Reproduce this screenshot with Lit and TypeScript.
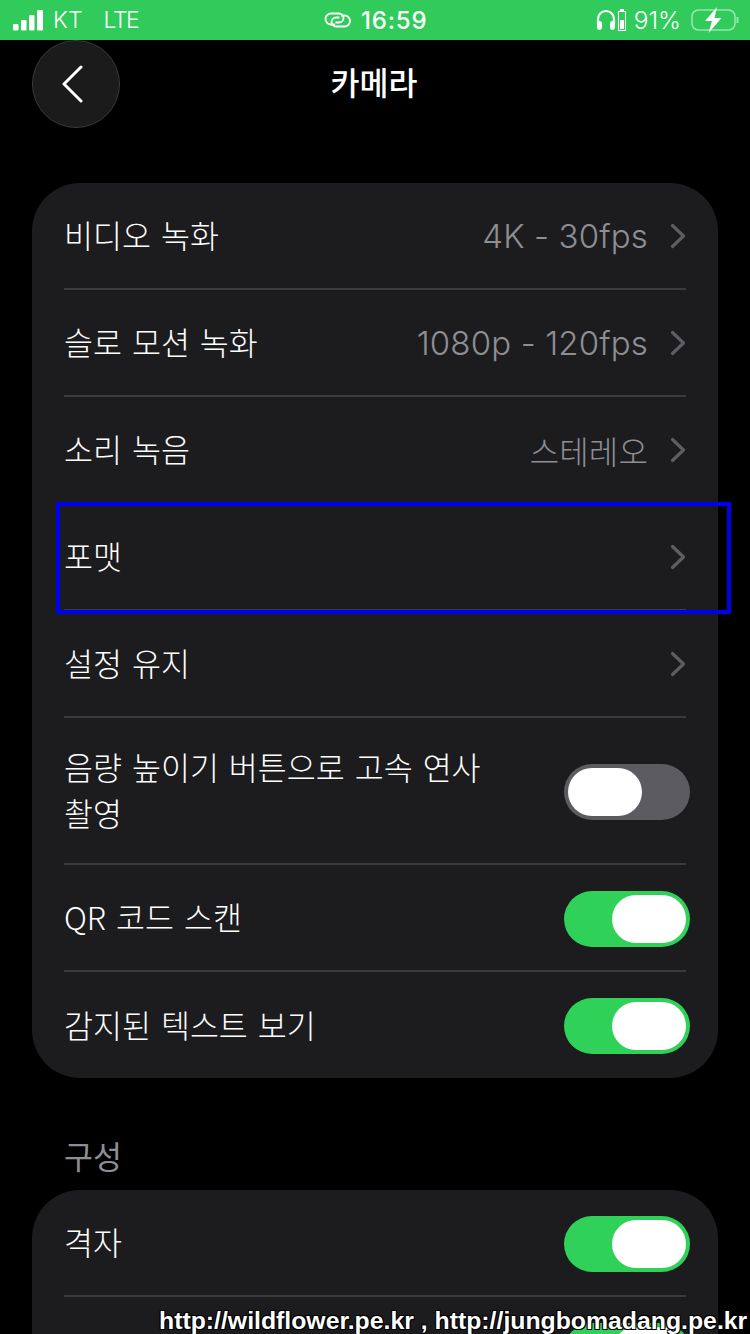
import { LitElement, html, css } from "lit";
import { customElement } from "lit/decorators.js";

const chevron = html`<svg class="chev" width="16" height="26" viewBox="0 0 16 26"><path d="M2.5 2.5 L13.5 13 L2.5 23.5" fill="none" stroke="#5d5d62" stroke-width="3.2" stroke-linecap="round" stroke-linejoin="round"/></svg>`;

@customElement("app-root")
export class AppRoot extends LitElement {
  static styles = css`
    :host { display: block; width: 750px; height: 1334px; overflow: hidden; position: relative; background: #000; color: #fff;
      font-family: "Noto Sans CJK KR", "Noto Sans", sans-serif; }
    .status { height: 40px; background: #30cb5a; display: flex; align-items: center; justify-content: space-between; padding: 0 11px 0 13px; font-family: "Inter", "Noto Sans", sans-serif; font-size: 23px; color: #fff; box-sizing: border-box; position: relative; }
    .st-left, .st-right { display: flex; align-items: center; }
    .st-left { gap: 6px; font-size: 23px; font-weight: 300; }
    .lte { margin-left: 15px; letter-spacing: -1.4px; }
    .st-center { position: absolute; left: 324px; top: 0; height: 40px; display: flex; align-items: center; gap: 9px; font-weight: 500; font-size: 24px; letter-spacing: 0.8px; }
    .st-right { font-weight: 300; font-size: 24.5px; }
    .cell { margin-left: 1px; }
    .pct { margin-left: 7px; margin-right: 10px; }
    .nav { height: 88px; position: relative; display: flex; align-items: center; justify-content: center; }
    .back { position: absolute; left: 32px; top: 0; width: 88px; height: 88px; border-radius: 50%; background: #1b1b1c; border: 1px solid #3a3a3b; box-sizing: border-box; display: flex; align-items: center; justify-content: center; }
    .back svg { margin-left: -6px; }
    .title { font-size: 31.5px; font-weight: 500; line-height: 44px; margin: -6px 0 0 -2px; }
    .content { padding: 55px 32px 0; display: flex; flex-direction: column; }
    .card { background: #1c1c1e; border-radius: 48px; padding: 0 32px; }
    .row { display: flex; align-items: center; justify-content: space-between; height: 105px; border-bottom: 2px solid #3b3b3e; font-size: 31.5px; line-height: 46px; font-weight: 300; word-spacing: 3px; }
    .row.last { border-bottom: none; height: 106px; }
    .row.last .toggle { margin-top: 2px; }
    .row.tall { height: 145px; }
    .label { max-width: 440px; margin-top: -3px; min-height: 46px; }
    .right { display: flex; align-items: center; gap: 22px; color: #8e8e93; font-family: "Inter", "Noto Sans CJK KR", sans-serif; font-size: 33px; font-weight: 300; letter-spacing: 0.15px; word-spacing: 0; }
    .right.ko { font-family: "Noto Sans CJK KR", sans-serif; font-size: 32px; }
    .chev { display: block; }
    .toggle { width: 126px; height: 56px; border-radius: 28px; background: #5b5b60; position: relative; margin: 3px -4px 0 0; flex: none; }
    .toggle.on { background: #30d158; }
    .knob { position: absolute; top: 4px; width: 74px; height: 48px; border-radius: 24px; background: #fff; left: 4px; }
    .toggle.on .knob { left: 48px; }
    .section { font-size: 31.5px; font-weight: 400; color: #8e8e93; line-height: 46px; padding: 55px 32px 11px; margin-top: -1px; margin-bottom: 1px; }
    .highlight { position: absolute; left: 56px; top: 502px; width: 675px; height: 112px; border: 4px solid #0000f0; box-sizing: border-box; pointer-events: none; }
    .mark { position: absolute; left: 159px; top: 1306px; font-family: "Liberation Sans", Arial, sans-serif; font-weight: 700; font-size: 24.8px; line-height: 30px; white-space: nowrap; color: #fff; text-shadow: 1px 1px 0 #000, -1px -1px 0 #000, 1px -1px 0 #000, -1px 1px 0 #000; }
  `;

  private row(label: string, value = "", ko = false) {
    return html`<div class="row"><span class="label">${label}</span><span class="right ${ko ? "ko" : ""}">${value ? html`<span>${value}</span>` : ""}${chevron}</span></div>`;
  }

  private tog(label: string, on: boolean, cls = "") {
    return html`<div class="row ${cls}"><span class="label">${label}</span><span class="toggle ${on ? "on" : ""}"><span class="knob"></span></span></div>`;
  }

  render() {
    return html`
      <div class="status">
        <div class="st-left">
          <svg width="34" height="22" viewBox="0 0 34 22" fill="#fff"><rect x="0" y="15" width="5.5" height="6.5" rx="1.2"/><rect x="8" y="11" width="5.5" height="10.5" rx="1.2"/><rect x="16" y="6" width="5.5" height="15.5" rx="1.2"/><rect x="24" y="1" width="6" height="20.5" rx="1.2"/></svg>
          <span>KT</span><span class="lte">LTE</span>
        </div>
        <div class="st-center">
          <svg width="28" height="16" viewBox="0 0 28 16" fill="none" stroke="#fff" stroke-width="1.8"><path d="M11 12.5H7a5.5 5.5 0 0 1 0-11h8a4.5 4.5 0 0 1 0 9h-3.5"/><path d="M17 3.5h3.5a5.5 5.5 0 0 1 0 11H12a4.5 4.5 0 0 1 0-9h3.5"/></svg>
          <span>16:59</span>
        </div>
        <div class="st-right">
          <svg width="20" height="22" viewBox="0 0 20 22" fill="none"><path d="M2 15V10a8 8 0 0 1 16 0v5" stroke="#fff" stroke-width="2.2"/><rect x="1" y="12" width="5" height="9" rx="2.4" fill="#fff"/><rect x="14" y="12" width="5" height="9" rx="2.4" fill="#fff"/></svg>
          <svg class="cell" width="10" height="22" viewBox="0 0 10 22" fill="none"><rect x="3" y="0" width="4" height="2" fill="#fff"/><rect x="1.5" y="2.5" width="7" height="19" stroke="#fff" stroke-width="1.1"/><rect x="3" y="11" width="4" height="9" fill="#fff"/></svg>
          <span class="pct">91%</span>
          <svg width="48" height="26" viewBox="0 0 48 26" fill="none"><rect x="1" y="3" width="43" height="20" rx="6.5" stroke="#fff" stroke-opacity=".5" stroke-width="1.6"/><path d="M46.5 10v6" stroke="#fff" stroke-opacity=".5" stroke-width="2"/><path d="M26 0 L14 14 H21 L17.5 26 L30.5 11 H23.5 Z" fill="#fff"/></svg>
        </div>
      </div>
      <div class="nav">
        <div class="back"><svg width="26" height="38" viewBox="0 0 26 38"><path d="M21 2 L4 19 L21 36" fill="none" stroke="#fff" stroke-width="3" stroke-linecap="round" stroke-linejoin="round"/></svg></div>
        <div class="title">카메라</div>
      </div>
      <div class="content">
        <div class="card">
          ${this.row("비디오 녹화", "4K - 30fps")}
          ${this.row("슬로 모션 녹화", "1080p - 120fps")}
          ${this.row("소리 녹음", "스테레오", true)}
          ${this.row("포맷")}
          ${this.row("설정 유지")}
          ${this.tog("음량 높이기 버튼으로 고속 연사 촬영", false, "tall")}
          ${this.tog("QR 코드 스캔", true)}
          ${this.tog("감지된 텍스트 보기", true, "last")}
        </div>
        <div class="section">구성</div>
        <div class="card">
          ${this.tog("격자", true)}
          ${this.tog("", true)}
        </div>
      </div>
      <div class="highlight"></div>
      <div class="mark">http://wildflower.pe.kr , http://jungbomadang.pe.kr</div>
    `;
  }
}
